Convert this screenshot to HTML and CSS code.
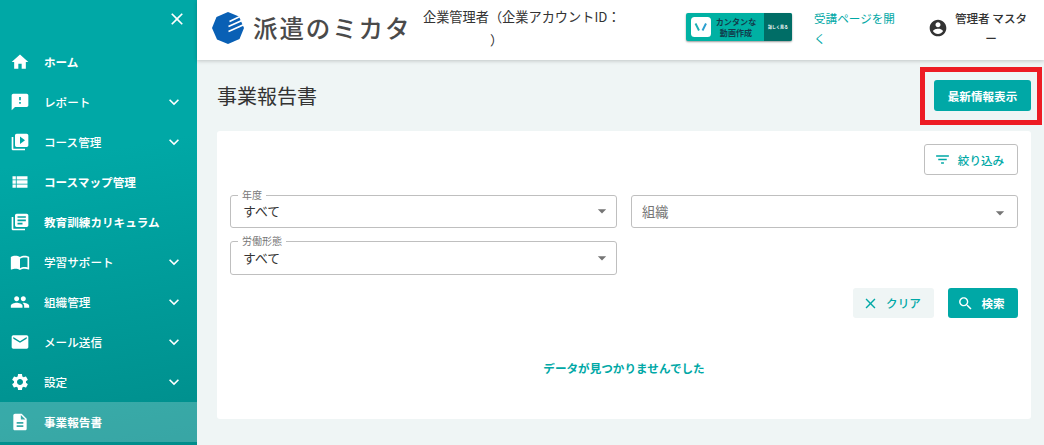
FILE: index.html
```html
<!DOCTYPE html>
<html lang="ja">
<head>
    <meta charset="UTF-8">
    <meta name="viewport" content="width=device-width, initial-scale=1.0">
    <title>事業報告書</title>
    <link rel="stylesheet" href="styles.css">
</head>
<body>
    <nav class="sidebar">
        <div class="sidebar-top">
            <svg class="close" viewBox="0 0 24 24"><path d="M19 6.41 17.59 5 12 10.59 6.41 5 5 6.41 10.59 12 5 17.59 6.41 19 12 13.41 17.59 19 19 17.59 13.41 12z"/></svg>
        </div>
        <a class="item">
            <svg viewBox="0 0 24 24"><path d="M10 20v-6h4v6h5v-8h3L12 3 2 12h3v8z"/></svg>
            <span>ホーム</span>
        </a>
        <a class="item sub">
            <svg viewBox="0 0 24 24"><path d="M20 2H4c-1.100 0-1.990.9-1.990 2L2 22l4-4h14c1.100 0 2-.9 2-2V4c0-1.100-.9-2-2-2zm-7 12h-2v-2h2v2zm0-4h-2V6h2v4z"/></svg>
            <span>レポート</span>
            <svg class="chevron" viewBox="0 0 24 24"><path d="M16.590 8.590 12 13.170 7.410 8.590 6 10l6 6 6-6z"/></svg>
        </a>
        <a class="item sub">
            <svg viewBox="0 0 24 24"><path d="M4 6H2v14c0 1.100.9 2 2 2h14v-2H4V6zm16-4H8c-1.100 0-2 .9-2 2v12c0 1.100.9 2 2 2h12c1.100 0 2-.9 2-2V4c0-1.100-.9-2-2-2zm-8 12.500v-9l6 4.500-6 4.500z"/></svg>
            <span>コース管理</span>
            <svg class="chevron" viewBox="0 0 24 24"><path d="M16.590 8.590 12 13.170 7.410 8.590 6 10l6 6 6-6z"/></svg>
        </a>
        <a class="item">
            <svg viewBox="0 0 24 24"><path d="M3 14h4v-4H3v4zm0 5h4v-4H3v4zM3 9h4V5H3v4zm5 5h13v-4H8v4zm0 5h13v-4H8v4zM8 5v4h13V5H8z"/></svg>
            <span>コースマップ管理</span>
        </a>
        <a class="item">
            <svg viewBox="0 0 24 24"><path d="M4 6H2v14c0 1.100.9 2 2 2h14v-2H4V6zm16-4H8c-1.100 0-2 .9-2 2v12c0 1.100.9 2 2 2h12c1.100 0 2-.9 2-2V4c0-1.100-.9-2-2-2zm-1 9H9V9h10v2zm-4 4H9v-2h6v2zm4-8H9V5h10v2z"/></svg>
            <span>教育訓練カリキュラム</span>
        </a>
        <a class="item sub">
            <svg viewBox="0 0 24 24"><path d="M21 5c-1.110-.35-2.330-.5-3.500-.5-1.950 0-4.050.4-5.500 1.500-1.450-1.100-3.550-1.500-5.500-1.500S2.450 4.900 1 6v14.650c0 .25.25.5.5.5.1 0 .15-.05.25-.05C3.100 20.450 5.050 20 6.500 20c1.950 0 4.050.4 5.500 1.500 1.350-.85 3.800-1.500 5.500-1.500 1.650 0 3.350.3 4.750 1.050.1.05.15.05.25.05.25 0 .5-.25.5-.5V6c-.6-.45-1.250-.75-2-1zm0 13.500c-1.100-.35-2.300-.5-3.500-.5-1.700 0-4.150.65-5.500 1.500V8c1.350-.85 3.800-1.500 5.500-1.500 1.200 0 2.400.15 3.500.5v11.500z"/></svg>
            <span>学習サポート</span>
            <svg class="chevron" viewBox="0 0 24 24"><path d="M16.590 8.590 12 13.170 7.410 8.590 6 10l6 6 6-6z"/></svg>
        </a>
        <a class="item sub">
            <svg viewBox="0 0 24 24"><path d="M16 11c1.660 0 2.990-1.340 2.990-3S17.660 5 16 5s-3 1.340-3 3 1.340 3 3 3zm-8 0c1.660 0 2.990-1.340 2.990-3S9.660 5 8 5 5 6.340 5 8s1.340 3 3 3zm0 2c-2.330 0-7 1.170-7 3.500V19h14v-2.500c0-2.330-4.670-3.500-7-3.500zm8 0c-.29 0-.62.020-.97.050 1.160.84 1.970 1.970 1.970 3.450V19h6v-2.500c0-2.330-4.670-3.500-7-3.500z"/></svg>
            <span>組織管理</span>
            <svg class="chevron" viewBox="0 0 24 24"><path d="M16.590 8.590 12 13.170 7.410 8.590 6 10l6 6 6-6z"/></svg>
        </a>
        <a class="item sub">
            <svg viewBox="0 0 24 24"><path d="M20 4H4c-1.100 0-1.990.9-1.990 2L2 18c0 1.100.9 2 2 2h16c1.100 0 2-.9 2-2V6c0-1.100-.9-2-2-2zm0 4-8 5-8-5V6l8 5 8-5v2z"/></svg>
            <span>メール送信</span>
            <svg class="chevron" viewBox="0 0 24 24"><path d="M16.590 8.590 12 13.170 7.410 8.590 6 10l6 6 6-6z"/></svg>
        </a>
        <a class="item sub">
            <svg viewBox="0 0 24 24"><path d="M19.140 12.940c.04-.3.06-.61.06-.94 0-.32-.02-.64-.07-.94l2.030-1.580c.18-.14.23-.41.12-.61l-1.920-3.320c-.12-.22-.37-.29-.59-.22l-2.390.96c-.5-.38-1.030-.7-1.620-.94l-.36-2.540c-.04-.24-.24-.41-.48-.41h-3.840c-.24 0-.43.17-.47.41l-.36 2.540c-.59.24-1.130.57-1.620.94l-2.390-.96c-.22-.08-.47 0-.59.22L2.740 8.870c-.12.21-.08.47.12.61l2.030 1.580c-.05.3-.09.63-.09.94s.02.64.07.94l-2.030 1.580c-.18.14-.23.41-.12.61l1.920 3.320c.12.22.37.29.59.22l2.390-.96c.5.38 1.030.7 1.620.94l.36 2.540c.05.24.24.41.48.41h3.840c.24 0 .44-.17.47-.41l.36-2.540c.59-.24 1.130-.56 1.620-.94l2.390.96c.22.08.47 0 .59-.22l1.920-3.320c.12-.22.07-.47-.12-.61l-2.010-1.580zM12 15.600c-1.980 0-3.600-1.620-3.600-3.600s1.620-3.600 3.600-3.600 3.600 1.620 3.600 3.600-1.620 3.600-3.600 3.600z"/></svg>
            <span>設定</span>
            <svg class="chevron" viewBox="0 0 24 24"><path d="M16.590 8.590 12 13.170 7.410 8.590 6 10l6 6 6-6z"/></svg>
        </a>
        <a class="item active">
            <svg viewBox="0 0 24 24"><path d="M14 2H6c-1.100 0-1.990.9-1.990 2L4 20c0 1.100.89 2 1.990 2H18c1.100 0 2-.9 2-2V8l-6-6zm2 16H8v-2h8v2zm0-4H8v-2h8v2zm-3-5V3.500L18.500 9H13z"/></svg>
            <span>事業報告書</span>
        </a>
    </nav>

    <div class="page">
        <header class="header">
            <div class="logo">
                <svg viewBox="0 0 32 32">
                    <path fill="#0960b5" d="M16 0 27 4.500 32 16 27.500 27 16 32 5 27.500 0 16 4.500 5z"/>
                    <path stroke="#fff" stroke-width="1.600" d="M17.500 9.500 29 4M16.500 14.500 32 7.500M16.500 19.500 32 12.500"/>
                </svg>
                <span>派遣のミカタ</span>
            </div>
            <div class="company">
                <div>企業管理者（企業アカウントID：</div>
                <div class="company-id">）</div>
            </div>
            <div class="banner">
                <svg viewBox="0 0 20 20"><rect width="20" height="20" rx="3.500" fill="#fff"/><path fill="none" stroke="#1db0b4" stroke-width="2" d="M4.500 6.500 8 13.500"/><path fill="none" stroke="#2b9fd0" stroke-width="2" d="M15 6.500 11.500 13.500"/></svg>
                <div class="banner-text">カンタンな<br>動画作成</div>
                <div class="banner-more">詳しく見る</div>
            </div>
            <a class="open-link">受講ページを開く</a>
            <svg class="account" viewBox="0 0 24 24"><path d="M12 2C6.480 2 2 6.480 2 12s4.480 10 10 10 10-4.480 10-10S17.520 2 12 2zm0 3c1.660 0 3 1.340 3 3s-1.340 3-3 3-3-1.340-3-3 1.340-3 3-3zm0 14.200c-2.500 0-4.710-1.280-6-3.220.03-1.990 4-3.080 6-3.080 1.990 0 5.970 1.090 6 3.080-1.290 1.940-3.500 3.220-6 3.220z"/></svg>
            <div class="user">管理者 マスタ<br>ー</div>
        </header>

        <main>
            <div class="title-row">
                <h1>事業報告書</h1>
                <div class="highlight">
                    <button class="btn primary latest">最新情報表示</button>
                </div>
            </div>

            <section class="card">
                <div class="card-top">
                    <button class="btn outlined">
                        <svg viewBox="0 0 24 24"><path d="M10 18h4v-2h-4v2zM3 6v2h18V6H3zm3 7h12v-2H6v2z"/></svg>
                        絞り込み
                    </button>
                </div>
                <div class="filters">
                    <fieldset class="select year">
                        <legend>年度</legend>
                        <span>すべて</span>
                        <svg viewBox="0 0 24 24"><path d="m7 10 5 5 5-5z"/></svg>
                    </fieldset>
                    <div class="select empty">
                        <span>組織</span>
                        <svg viewBox="0 0 24 24"><path d="m7 10 5 5 5-5z"/></svg>
                    </div>
                    <fieldset class="select">
                        <legend>労働形態</legend>
                        <span>すべて</span>
                        <svg viewBox="0 0 24 24"><path d="m7 10 5 5 5-5z"/></svg>
                    </fieldset>
                </div>
                <div class="actions">
                    <button class="btn clear">
                        <svg viewBox="0 0 24 24"><path d="M19 6.410 17.590 5 12 10.590 6.410 5 5 6.410 10.590 12 5 17.590 6.410 19 12 13.410 17.590 19 19 17.590 13.410 12z"/></svg>
                        クリア
                    </button>
                    <button class="btn primary search">
                        <svg viewBox="0 0 24 24"><path d="M15.500 14h-.79l-.28-.27C15.410 12.590 16 11.110 16 9.500 16 5.910 13.090 3 9.500 3S3 5.910 3 9.500 5.910 16 9.500 16c1.610 0 3.090-.59 4.230-1.570l.27.28v.79l5 4.990L20.490 19l-4.990-5zm-6 0C7.010 14 5 11.990 5 9.500S7.010 5 9.500 5 14 7.010 14 9.500 11.990 14 9.500 14z"/></svg>
                        検索
                    </button>
                </div>
                <p class="no-data">データが見つかりませんでした</p>
            </section>
        </main>
    </div>
</body>
</html>
```
FILE: styles.css
```css
:root {
    --primary: #00a8a6;
    --bg: #eff5f5;
    --text: #333333;
    --border: #bfbfbf;
}

* {
    box-sizing: border-box;
}

body {
    margin: 0;
    height: 100vh;
    display: flex;
    overflow: hidden;
    font-family: "Noto Sans CJK JP", "Noto Sans", sans-serif;
    font-size: 11.6px;
    color: var(--text);
    background: var(--bg);
}

svg {
    display: block;
    flex: none;
    fill: currentColor;
}

/* Sidebar */
.sidebar {
    width: 197px;
    flex: none;
    color: #fff;
    background: linear-gradient(170deg, #00a8a6 35%, #008d8b 100%);
}

.sidebar-top {
    height: 42px;
    display: flex;
    justify-content: flex-end;
    padding: 9px 10px 0 0;
}

.close {
    width: 20px;
    height: 20px;
}

.item {
    height: 40px;
    display: flex;
    align-items: center;
    padding: 0 13px 0 10px;
    font-weight: 700;
}

.item svg {
    width: 20px;
    height: 20px;
}

.item span {
    flex: 1;
    margin-left: 14px;
    white-space: nowrap;
}

.item.sub {
    font-weight: 500;
}

.item.active {
    background: rgba(255, 255, 255, 0.22);
}

/* Header */
.page {
    flex: 1;
    min-width: 0;
}

.header {
    height: 60px;
    display: flex;
    align-items: flex-start;
    background: #fff;
    box-shadow: 0 1px 4px rgba(0, 0, 0, 0.2);
    padding-left: 15px;
}

.logo {
    width: 211px;
    display: flex;
    align-items: center;
    margin-top: 8px;
    height: 40px;
}

.logo svg {
    width: 32px;
    height: 32px;
}

.logo span {
    margin-left: 9px;
    font-size: 24.5px;
    letter-spacing: 1.9px;
    font-weight: 500;
    line-height: 38px;
    padding-bottom: 1px;
    white-space: nowrap;
    color: #4a4a4a;
}

.company {
    width: 204px;
    font-size: 13.2px;
    line-height: 23px;
    padding-top: 5px;
    white-space: nowrap;
}

.company-id {
    padding-left: 67px;
}

.banner {
    width: 106px;
    height: 28px;
    margin: 13px 0 0 59px;
    display: flex;
    align-items: center;
    border-radius: 2px;
    background: #00b1a3;
    box-shadow: 0 1px 2px rgba(0, 0, 0, 0.4);
    overflow: hidden;
    padding-left: 5px;
}

.banner svg {
    width: 20px;
    height: 20px;
}

.banner-text {
    flex: 1;
    padding-right: 3px;
    font-size: 8.1px;
    line-height: 11px;
    font-weight: 700;
    text-align: center;
    color: #123c4c;
    white-space: nowrap;
}

.banner-more {
    width: 28px;
    height: 28px;
    line-height: 28px;
    font-size: 4px;
    font-weight: 700;
    text-align: center;
    color: #fff;
    background: #006d66;
}

.open-link {
    width: 86px;
    margin-left: 22px;
    padding-top: 8px;
    line-height: 20px;
    color: var(--primary);
}

.account {
    width: 20px;
    height: 20px;
    margin: 18px 0 0 28px;
}

.user {
    width: 76px;
    margin-left: 5px;
    padding-top: 8px;
    line-height: 20px;
    font-weight: 500;
    text-align: center;
    white-space: nowrap;
}

/* Main */
main {
    padding: 7px 2px 0 20px;
}

.title-row {
    display: flex;
    justify-content: space-between;
}

h1 {
    margin: 0;
    font-size: 20px;
    font-weight: 400;
    line-height: 58px;
}

.highlight {
    width: 122px;
    height: 58px;
    border: 5px solid #ed1c24;
    padding: 8px 0 0 9px;
}

.btn {
    display: flex;
    align-items: center;
    justify-content: center;
    gap: 7px;
    height: 31px;
    padding: 0 4px 0 0;
    border: 0;
    border-radius: 3px;
    font-family: inherit;
    font-size: 11.6px;
    font-weight: 500;
    color: var(--primary);
}

.btn svg {
    width: 17px;
    height: 17px;
}

.btn.primary {
    background: var(--primary);
    color: #fff;
    font-weight: 700;
}

.btn.latest {
    width: 97px;
    padding: 0;
}

.card {
    width: 814px;
    height: 288px;
    margin-top: 6px;
    padding: 13px;
    background: #fff;
    border-radius: 3px;
}

.card-top {
    display: flex;
    justify-content: flex-end;
}

.outlined {
    width: 94px;
    border: 1px solid var(--border);
    background: #fff;
}

.filters {
    display: grid;
    grid-template-columns: 387px 387px;
    column-gap: 14px;
    row-gap: 7px;
    margin-top: 13px;
}

.select {
    height: 40px;
    min-width: 0;
    margin: 0;
    padding: 0 4px 7px 12px;
    border: 1px solid var(--border);
    border-radius: 3px;
    display: flex;
    align-items: center;
    justify-content: space-between;
    font-size: 12.8px;
}

.select legend {
    height: 13px;
    margin-left: -5px;
    padding: 0 4px;
    font-size: 10px;
    line-height: 11px;
    color: #777;
}

.select span {
    line-height: 20px;
}

.select svg {
    width: 20px;
    height: 20px;
    color: #757575;
}

.select.year {
    height: 39px;
    margin-top: 1px;
    padding-bottom: 8px;
}

.select.empty {
    height: 33px;
    margin-top: 7px;
    padding: 0 7px 0 10px;
    font-size: 13.2px;
    color: #757575;
}

.select.empty svg {
    margin-top: 2px;
}

.actions {
    display: flex;
    justify-content: flex-end;
    gap: 14px;
    margin-top: 13px;
}

.clear {
    width: 81px;
    height: 30px;
    background: var(--bg);
}

.search {
    width: 70px;
    height: 30px;
}

.no-data {
    margin: 40px 0 0;
    text-align: center;
    line-height: 20px;
    font-weight: 700;
    color: var(--primary);
}
```
